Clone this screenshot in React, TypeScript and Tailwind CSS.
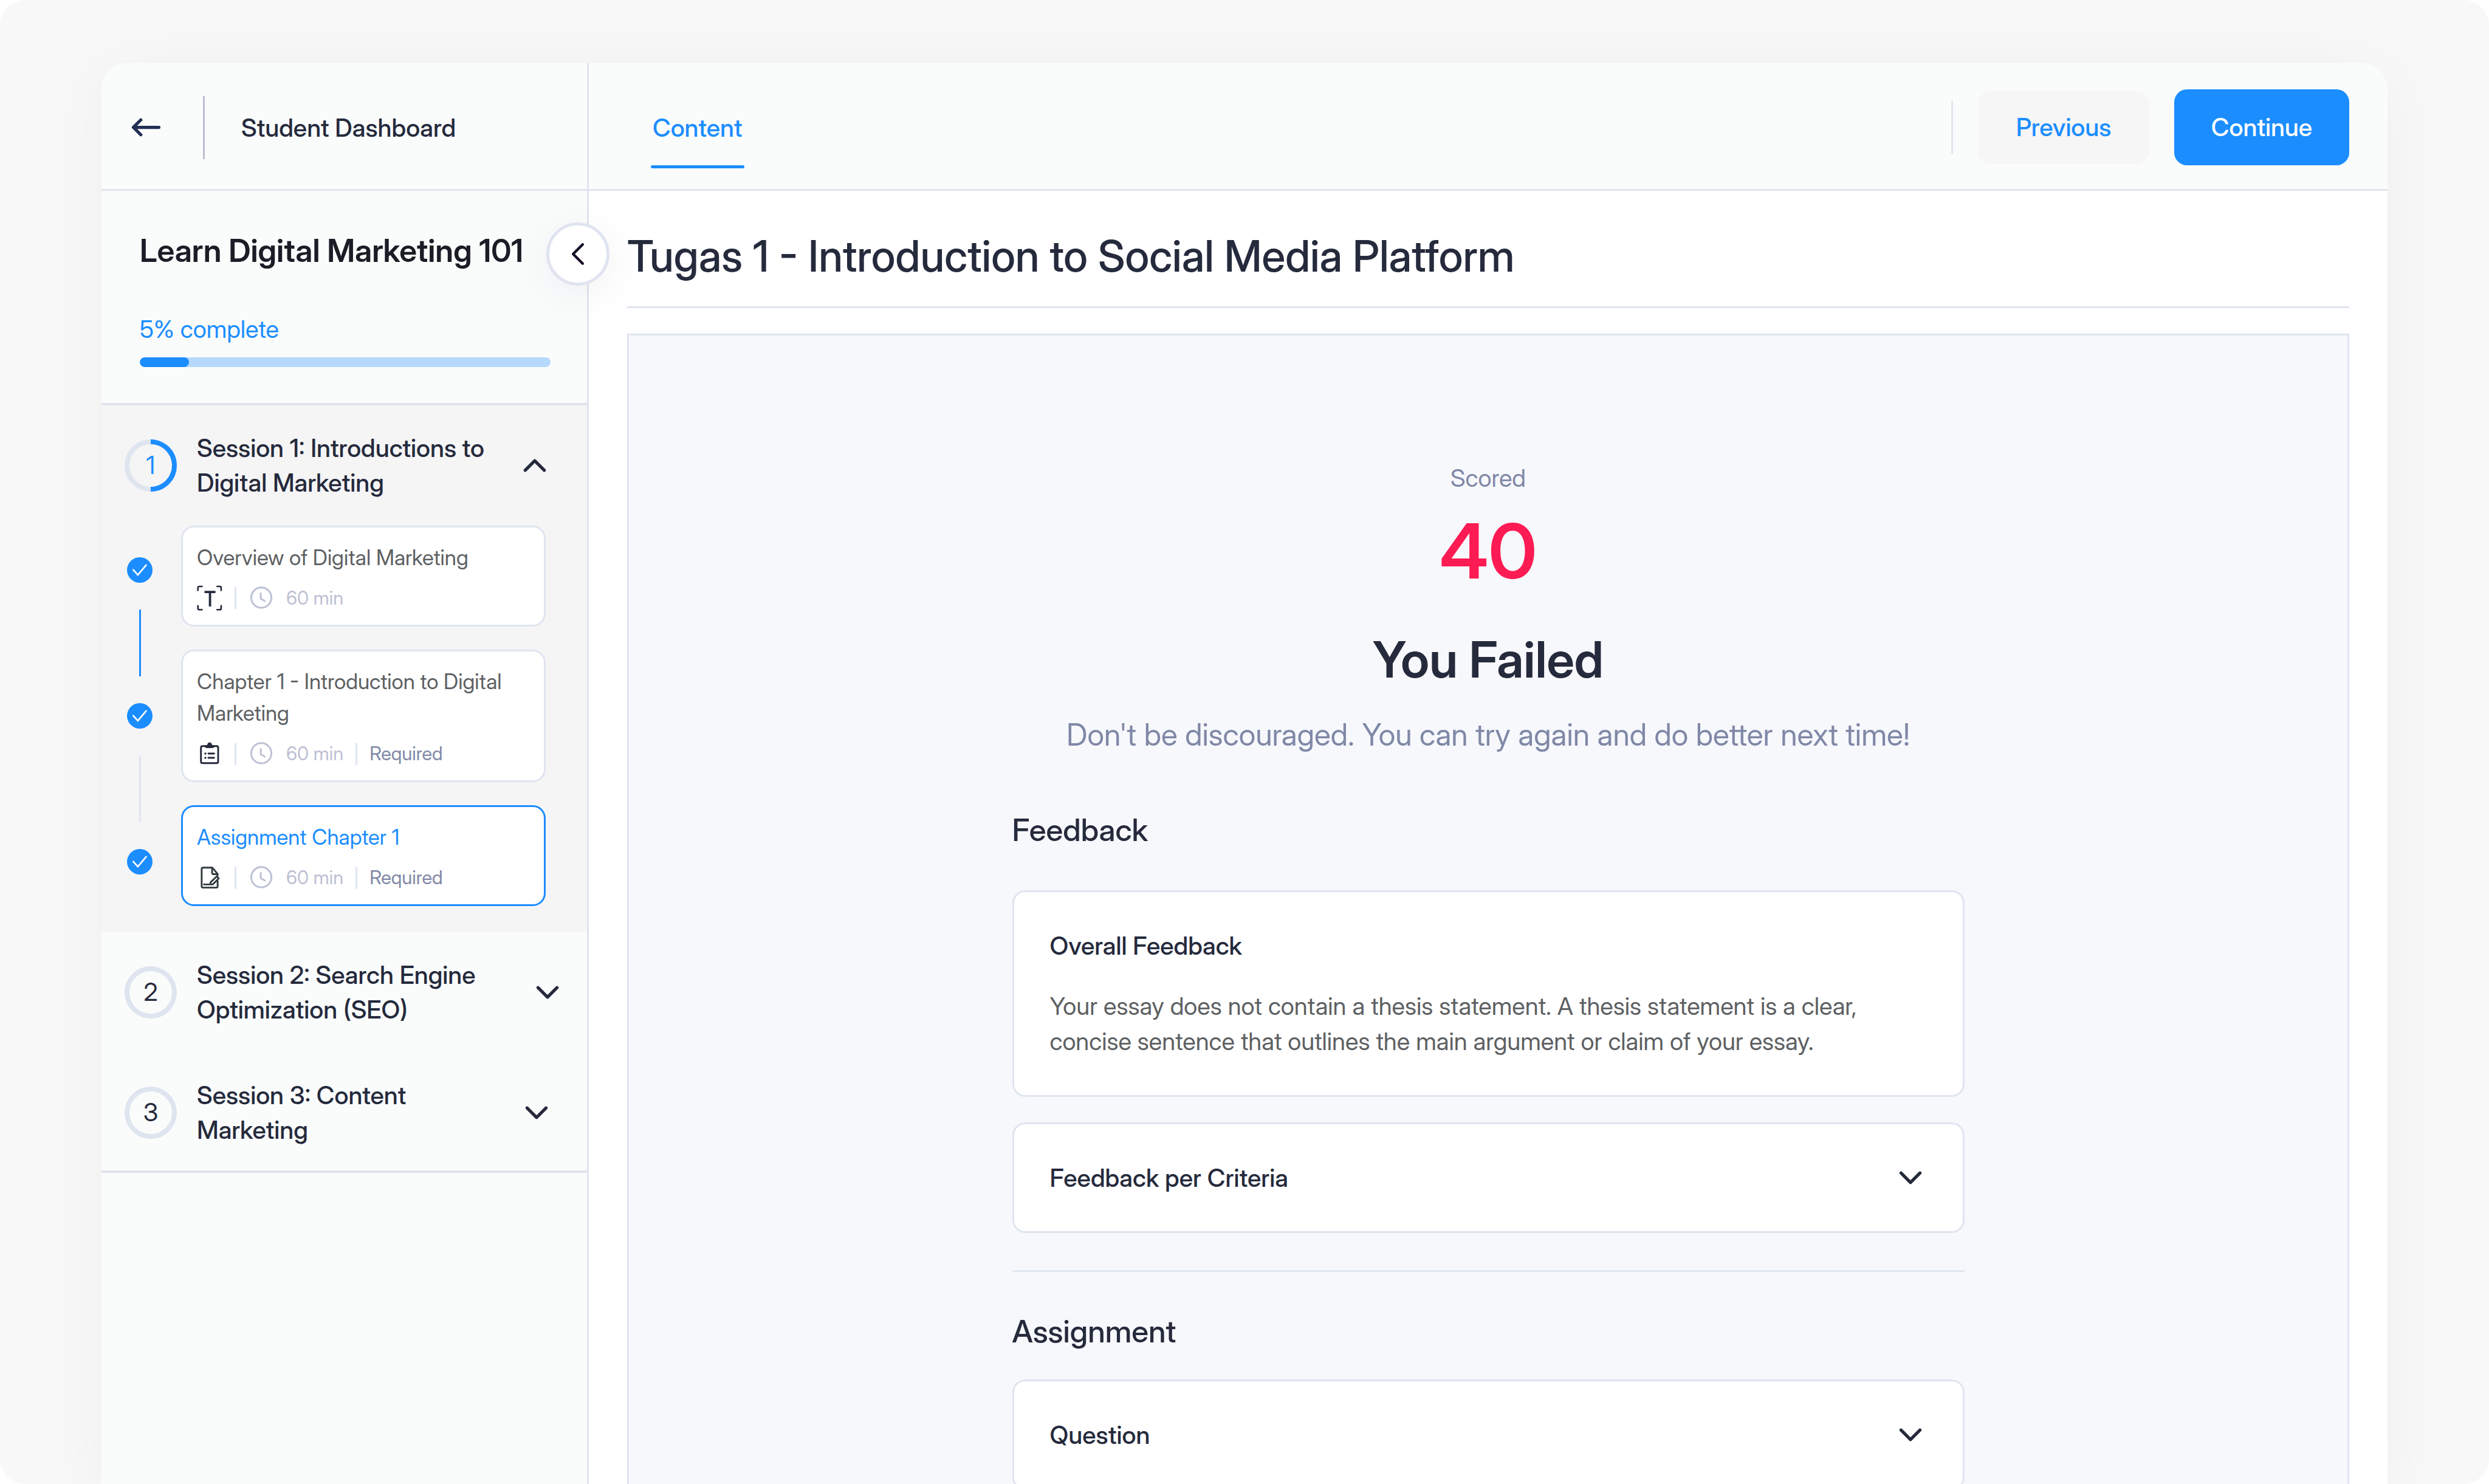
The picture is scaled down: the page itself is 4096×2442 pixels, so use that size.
import { useState, type ReactNode } from "react";

function ArrowLeft() {
  return (
    <svg viewBox="0 0 72 72" className="size-[63px]" fill="none" stroke="#232f55" strokeWidth="6" strokeLinecap="round" strokeLinejoin="round" aria-hidden="true">
      <path d="M60 36H12M26 22 12 36l14 14" />
    </svg>
  );
}

function Chevron({ up = false }: { up?: boolean }) {
  return (
    <svg viewBox="0 0 62 62" className="size-[54px] shrink-0" fill="none" stroke="#252a3c" strokeWidth="6" strokeLinecap="round" strokeLinejoin="round" aria-hidden="true">
      <path d={up ? "M13 40 31 22l18 18" : "M13 22 31 40l18-18"} />
    </svg>
  );
}

function CheckBadge() {
  return (
    <svg viewBox="0 0 144 144" className="size-[42px] shrink-0" role="img" aria-label="Completed">
      <circle cx="72" cy="72" r="72" fill="#1b8dff" />
      <path d="M35 71l26 29 47-56" fill="none" stroke="#fff" strokeWidth="9" strokeLinecap="round" strokeLinejoin="round" />
    </svg>
  );
}

function ClockIcon() {
  return (
    <svg viewBox="0 0 144 144" className="size-[42px] shrink-0" fill="none" stroke="#bcc0d4" strokeLinecap="round" strokeLinejoin="round" aria-hidden="true">
      <circle cx="72" cy="70" r="57" strokeWidth="10" />
      <path d="M69 46v30l23 13" strokeWidth="10" />
    </svg>
  );
}

function TextIcon() {
  return (
    <svg viewBox="0 0 144 144" className="size-[42px] shrink-0" fill="none" stroke="#252a3c" aria-hidden="true">
      <path
        d="M6 29V15q0-8 8-8h15M114 7h15q8 0 8 8v14M137 116v14q0 8-8 8h-15M29 138H14q-8 0-8-8v-14"
        strokeWidth="9"
        strokeLinecap="round"
      />
      <path d="M43 38h62M74 38v82" strokeWidth="13" />
    </svg>
  );
}

function ClipboardIcon() {
  return (
    <svg viewBox="0 0 144 144" className="size-[42px] shrink-0" fill="none" stroke="#252a3c" strokeLinecap="round" aria-hidden="true">
      <rect x="23" y="30" width="97" height="96" rx="9" strokeWidth="10" />
      <path d="M46 25h12q2-16 14-16t14 16h12v6q0 10-10 10H56q-10 0-10-10z" fill="#252a3c" stroke="none" />
      <circle cx="48" cy="72" r="6" fill="#252a3c" stroke="none" />
      <circle cx="48" cy="96" r="6" fill="#252a3c" stroke="none" />
      <path d="M65 72h32M65 96h32" strokeWidth="10" />
    </svg>
  );
}

function EssayIcon() {
  return (
    <svg viewBox="0 0 144 144" className="size-[42px] shrink-0" fill="none" stroke="#323b3d" strokeWidth="10" strokeLinecap="round" strokeLinejoin="round" aria-hidden="true">
      <path d="M117 92v30q0 7-7 7H34q-7 0-7-7V23q0-7 7-7h53l30 36v8" />
      <path d="M86 18v27q0 8 8 8h22" />
      <path d="M40 111h49l34-33-10-13-36 34v12" />
    </svg>
  );
}

function SessionNumber({ value, active = false }: { value: number; active?: boolean }) {
  return (
    <span className={`relative flex size-[86px] shrink-0 items-center justify-center text-[41px] ${active ? "text-[#1b8dff]" : "text-[#252a3c]"}`}>
      <svg viewBox="0 0 86 86" className="absolute inset-0 size-full" fill="none" strokeWidth="8" aria-hidden="true">
        <circle cx="43" cy="43" r="39" stroke="#dfe5ef" />
        {active && <path d="M43 4a39 39 0 0 1 0 78" stroke="#1b8dff" />}
      </svg>
      {value}
    </span>
  );
}

function Divider() {
  return <span className="h-[37px] w-[3px] shrink-0 rounded-full bg-[#dfe6f0]" />;
}

function SessionRow({ value, title, inset, open = false, onToggle }: { value: number; title: string; inset: string; open?: boolean; onToggle?: () => void }) {
  return (
    <button type="button" aria-expanded={open} onClick={onToggle} className={`flex w-full items-center gap-[33px] pl-[38px] text-left ${inset}`}>
      <SessionNumber value={value} active={open} />
      <span className="w-[510px] text-[41px] leading-[57px] font-medium text-[#252a3c]">{title}</span>
      <span className="ml-auto">
        <Chevron up={open} />
      </span>
    </button>
  );
}

function LessonCard({ title, icon, required = false, active = false }: { title: string; icon: ReactNode; required?: boolean; active?: boolean }) {
  return (
    <a
      href="#lesson"
      aria-current={active ? "page" : undefined}
      className={`flex flex-col gap-5 rounded-[21px] border-[3px] bg-white px-[23px] py-[23px] ${active ? "border-[#1b8dff]" : "border-[#dfe4ef]"}`}
    >
      <span className={`text-[35px] leading-[52px] ${active ? "text-[#1b8dff]" : "text-[#5d6062]"}`}>{title}</span>
      <span className="flex h-[42px] items-center gap-5 text-[31px] leading-[42px] text-[#bdc0d3]">
        {icon}
        <Divider />
        <ClockIcon />
        <span>60 min</span>
        {required && (
          <>
            <Divider />
            <span className="text-[#7f88a6]">Required</span>
          </>
        )}
      </span>
    </a>
  );
}

function Accordion({ title }: { title: string }) {
  const [open, setOpen] = useState(false);
  return (
    <button
      type="button"
      aria-expanded={open}
      onClick={() => setOpen(!open)}
      className="flex w-full items-center justify-between rounded-[21px] border-[3px] border-[#dfe4ef] bg-white p-[59px] text-left text-[41px] leading-[58px] font-medium text-[#252a3c]"
    >
      {title}
      <Chevron up={open} />
    </button>
  );
}

function Sidebar() {
  const [open, setOpen] = useState(true);
  return (
    <aside className="relative flex w-[802px] shrink-0 flex-col border-r-[3px] border-[#dfe4ef] bg-[#fafcfc]">
      <div className="flex h-[210px] shrink-0 items-center border-b-[3px] border-[#dfe4ef] pt-1 pl-[42px]">
        <a href="#back" aria-label="Back">
          <ArrowLeft />
        </a>
        <span className="ml-[62px] h-[104px] w-[3px] bg-[#bcbfd2]" />
        <span className="ml-[60px] text-[41px] leading-[58px] font-medium text-[#252a3c]">Student Dashboard</span>
      </div>

      <div className="relative flex flex-col border-b-4 border-[#dfe4ef] px-[63px] pt-[60px] pb-[59px]">
        <h2 className="text-[52px] leading-[78px] font-semibold whitespace-nowrap text-[#1c1c26]">Learn Digital Marketing 101</h2>
        <p id="course-progress" className="mt-[61px] text-[40px] leading-[58px] text-[#1b8dff]">
          5% complete
        </p>
        <div role="progressbar" aria-labelledby="course-progress" aria-valuenow={5} className="mt-[17px] mr-[-3px] h-4 overflow-hidden rounded-full bg-[#b6d8fd]">
          <div className="h-full w-[12%] rounded-full bg-[#1b8dff]" />
        </div>
        <button
          type="button"
          aria-label="Collapse sidebar"
          className="absolute top-[52px] right-[-37px] z-10 flex size-[104px] items-center justify-center rounded-full border-[5px] border-[#dfe4ef] bg-white shadow-[0_14px_70px_rgba(20,20,60,0.06)]"
        >
          <svg viewBox="0 0 48 48" className="size-[42px]" fill="none" stroke="#160e28" strokeWidth="5" strokeLinecap="round" strokeLinejoin="round" aria-hidden="true">
            <path d="M33 6 15 24l18 18" />
          </svg>
        </button>
      </div>

      <div className="bg-[#f5f5f6] py-[42px]">
        <SessionRow value={1} title="Session 1: Introductions to Digital Marketing" inset="pr-[59px]" open={open} onToggle={() => setOpen(!open)} />
        {open && (
          <div className="mt-[42px] flex pr-[68px] pl-[42px]">
            <div className="flex w-[89px] flex-col items-start gap-[44px] pt-[52px]">
              <CheckBadge />
              <span className="ml-5 h-[110px] w-[3px] bg-[#1b8dff]" />
              <CheckBadge />
              <span className="ml-5 h-[110px] w-[3px] bg-[#dfe4ef]" />
              <CheckBadge />
            </div>
            <div className="flex flex-1 flex-col gap-[38px]">
              <LessonCard title="Overview of Digital Marketing" icon={<TextIcon />} />
              <LessonCard title="Chapter 1 - Introduction to Digital Marketing" icon={<ClipboardIcon />} required />
              <LessonCard title="Assignment Chapter 1" icon={<EssayIcon />} required active />
            </div>
          </div>
        )}
      </div>
      <div className="flex flex-col gap-[84px] border-b-4 border-[#dfe4ef] pt-[43px] pb-[38px]">
        <SessionRow value={2} title="Session 2: Search Engine Optimization (SEO)" inset="pr-[38px]" />
        <SessionRow value={3} title="Session 3: Content Marketing" inset="pr-[56px]" />
      </div>
    </aside>
  );
}

function TopBar() {
  return (
    <header className="flex h-[210px] shrink-0 items-center border-b-[3px] border-[#dfe4ef] bg-[#fafcfc] pt-1 pr-[63px] pl-[102px]">
      <a href="#content" className="relative px-[3px] py-[38px] text-[41px] leading-[58px] font-medium text-[#1b8dff]">
        Content
        <span className="absolute inset-x-0 bottom-0 h-[5px] rounded-full bg-[#1b8dff]" />
      </a>
      <div className="ml-auto flex items-center gap-[41px] text-[41px] font-medium">
        <span className="h-[87px] w-[3px] bg-[#dfe6ee]" />
        <button type="button" className="h-[120px] w-[282px] rounded-[21px] bg-[#f6f6f7] text-[#1b8dff]">
          Previous
        </button>
        <button type="button" className="h-[125px] w-[288px] rounded-[21px] bg-[#1b8dff] text-white">
          Continue
        </button>
      </div>
    </header>
  );
}

function Results() {
  return (
    <section className="mt-[42px] flex flex-1 flex-col items-center border-[3px] border-b-0 border-[#dfe4ef] bg-[#f7f8fc] pt-[204px] text-[#252a3c]">
      <p className="text-[40px] leading-[62px] text-[#7f88a6]">Scored</p>
      <p className="mt-[26px] text-[125px] leading-[126px] font-semibold text-[#fd1b53]">40</p>
      <h2 className="mt-[66px] text-[82px] leading-[100px] font-semibold">You Failed</h2>
      <p className="mt-[34px] text-[50px] leading-[78px] text-[#7f88a6]">Don't be discouraged. You can try again and do better next time!</p>
      <div className="mt-[79px] flex w-[1567px] max-w-full flex-col">
        <h3 className="text-[51px] leading-[78px] font-medium">Feedback</h3>
        <article className="mt-[60px] rounded-[21px] border-[3px] border-[#dfe4ef] bg-white p-[59px] leading-[58px]">
          <h4 className="text-[41px] leading-[58px] font-medium">Overall Feedback</h4>
          <p className="mt-[42px] max-w-[1400px] text-[40px] leading-[58px] text-[#5d6062]">
            Your essay does not contain a thesis statement. A thesis statement is a clear, concise sentence that outlines the main argument or claim of your essay.
          </p>
        </article>
        <div className="mt-[42px]">
          <Accordion title="Feedback per Criteria" />
        </div>
        <hr className="mt-[61px] border-t-[3px] border-[#dfe6ef]" />
        <h3 className="mt-[59px] text-[51px] leading-[78px] font-medium">Assignment</h3>
        <div className="mt-10">
          <Accordion title="Question" />
        </div>
      </div>
    </section>
  );
}

export default function App() {
  return (
    <div className="h-screen overflow-hidden bg-white font-['Inter_Display','Inter',sans-serif]">
      <div className="flex h-full overflow-hidden rounded-[42px] bg-[#f8f8f8] px-[167px] pt-[104px]">
        <div className="flex h-full flex-1 rounded-t-[42px] shadow-[0_14px_100px_rgba(0,0,0,0.045)]">
          <div className="flex min-w-0 flex-1 overflow-hidden rounded-t-[42px] bg-white">
            <Sidebar />
            <main className="flex min-w-0 flex-1 flex-col">
              <TopBar />
              <div className="flex flex-1 flex-col px-[63px] pt-[63px]">
                <h1 className="border-b-[3px] border-[#dfe4ee] pb-[39px] text-[71px] leading-[88px] font-medium text-[#252a3c]">Tugas 1 - Introduction to Social Media Platform</h1>
                <Results />
              </div>
            </main>
          </div>
        </div>
      </div>
    </div>
  );
}
